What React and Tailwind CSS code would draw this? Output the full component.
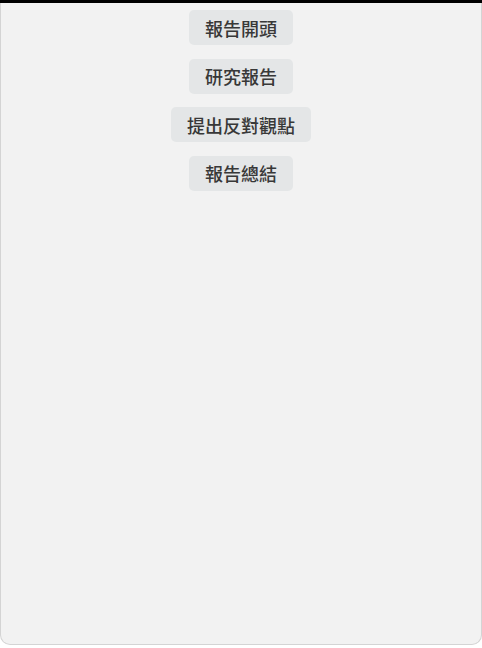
import React from "react";

const items = ["報告開頭", "研究報告", "提出反對觀點", "報告總結"];

export default function App() {
  return (
    <div className="w-[482px] h-[648px] bg-white" style={{ fontFamily: '"Noto Sans CJK TC", "Noto Sans", sans-serif' }}>
      <div className="h-[3px] bg-black" />
      <div className="h-[642px] bg-[#f2f2f2] border-x border-b border-[#d4d4d4] rounded-b-[10px] flex flex-col items-center pt-[7px] gap-[13.5px]">
        {items.map((t) => (
          <div
            key={t}
            className="h-[35px] px-[16px] flex items-center rounded-[5px] bg-[#e4e6e7] text-[#383838] text-[18px] font-medium leading-none"
          >
            {t}
          </div>
        ))}
      </div>
    </div>
  );
}
